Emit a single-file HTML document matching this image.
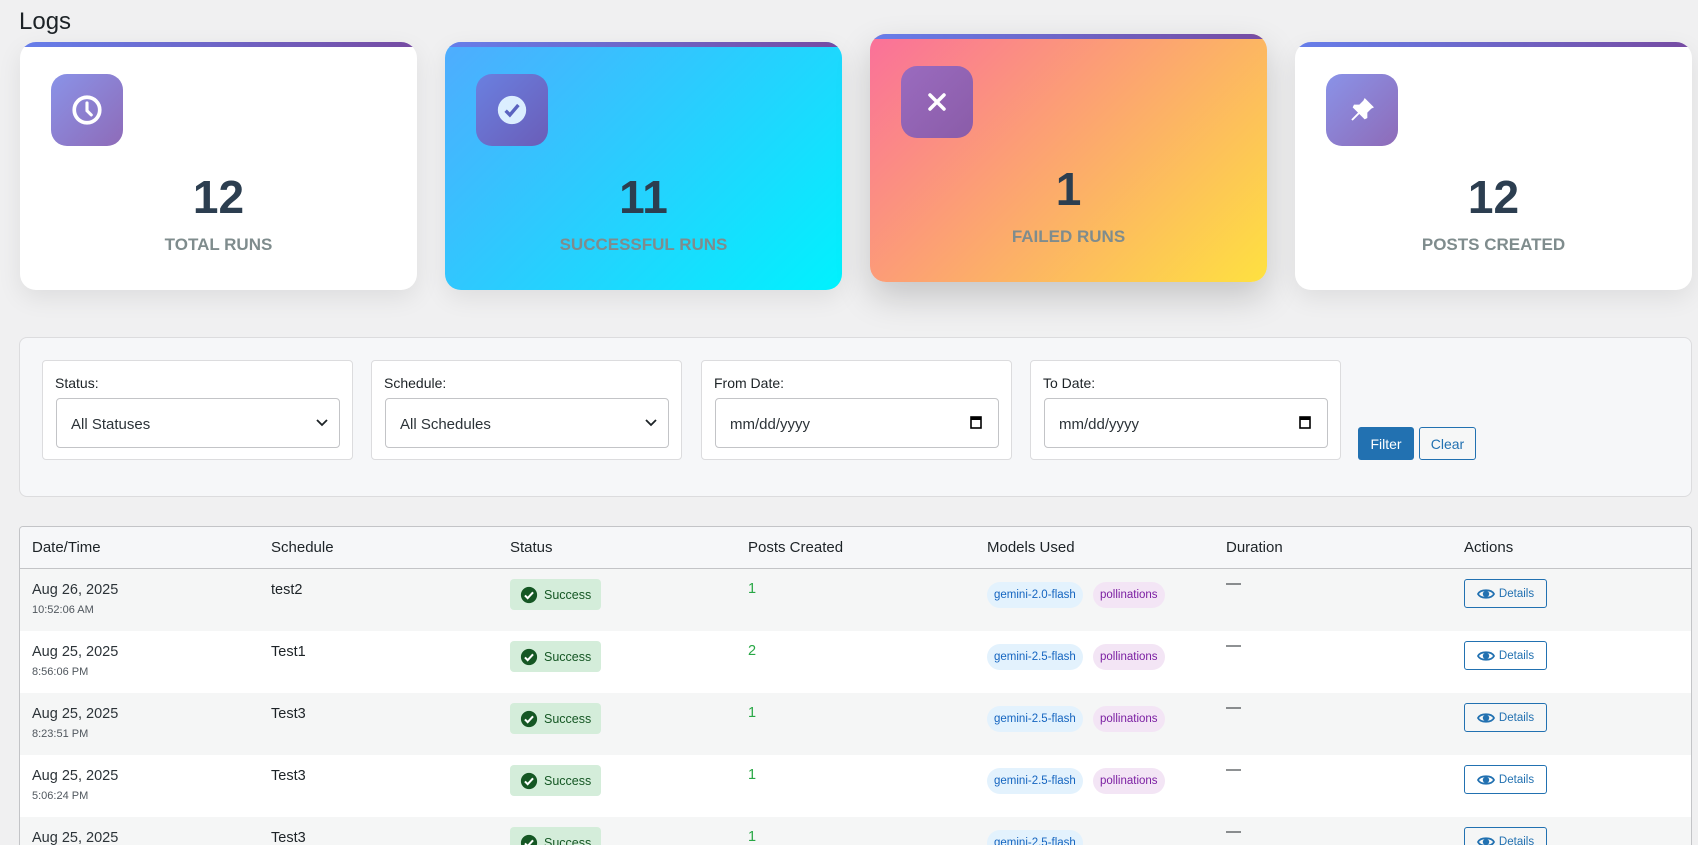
<!DOCTYPE html>
<html style="overflow:hidden;height:845px"><head><style>
*{box-sizing:border-box;margin:0;padding:0}
body{width:1698px;height:845px;overflow:hidden;background:#f0f0f1;font-family:"Liberation Sans",sans-serif;color:#1d2327;position:relative}
.abs{position:absolute}
h1{position:absolute;left:19px;top:8px;font-size:24px;font-weight:400;color:#1d2327}
.card{position:absolute;width:397px;height:248px;border-radius:16px;background:#fff;overflow:hidden;box-shadow:0 8px 25px rgba(0,0,0,.08)}
.card:before{content:"";position:absolute;left:0;top:0;right:0;height:5px;background:linear-gradient(90deg,#667eea,#764ba2)}
.ic{position:absolute;left:31px;top:32px;width:72px;height:72px;border-radius:16px;background:linear-gradient(135deg,#8a93e8,#8e6bb8);display:flex;align-items:center;justify-content:center}
.num{position:absolute;left:0;right:0;top:128px;text-align:center;font-size:46px;font-weight:700;color:#2c3e50}
.lbl{position:absolute;left:0;right:0;top:193px;text-align:center;font-size:17px;font-weight:600;color:#7f8c8d}
.panel{position:absolute;left:19px;top:337px;width:1673px;height:160px;background:#f6f7f9;border:1px solid #dcdcde;border-radius:8px}
.fg{position:absolute;top:22px;width:311px;height:100px;background:#fff;border:1px solid #dcdcde;border-radius:4px}
.fg label{position:absolute;left:12px;top:14px;font-size:14px;color:#1d2327}
.inp{position:absolute;left:13px;top:37px;width:284px;height:50px;border:1px solid #c3c4c7;border-radius:4px;font-size:15px;padding:17px 0 0 14px;color:#2c3338}
.btn{position:absolute;top:89px;height:33px;border-radius:3px;font-size:14px;display:flex;align-items:center;justify-content:center}
.tbl{position:absolute;left:19px;top:526px;width:1673px;height:319px;background:#fff;border:1px solid #c3c4c7;border-bottom:none;border-radius:4px 4px 0 0;overflow:hidden}
.hd{position:absolute;left:0;top:0;right:0;height:42px;background:#f6f7f9;border-bottom:1px solid #c3c4c7}
.th{position:absolute;top:12px;font-size:15px;color:#1d2327}
.row{position:absolute;left:0;right:0;height:62px}
.c{position:absolute}
.badge{position:absolute;left:490px;top:10px;width:91px;height:31px;background:#d4edda;border-radius:4px;font-size:12.5px;color:#155724;display:flex;align-items:center;padding-left:10px;gap:6px}
.m{position:absolute;top:13px;height:26px;border-radius:13px;font-size:11.5px;display:flex;align-items:center;padding:0 7px}
.det{position:absolute;left:1444px;top:10px;width:83px;height:29px;border:1px solid #2271b1;border-radius:3px;color:#2271b1;font-size:11.5px;display:flex;align-items:center;justify-content:center;gap:4px}
</style></head><body>
<h1>Logs</h1>

<div class="card" style="left:20px;top:42px">
<div class="ic"><svg width="34" height="34" viewBox="0 0 24 24"><circle cx="12" cy="12" r="9" fill="none" stroke="#fff" stroke-width="2.6"/><path d="M12 7v5.5l3 3" fill="none" stroke="#fff" stroke-width="2.2" stroke-linecap="round"/></svg></div>
<div class="num">12</div><div class="lbl">TOTAL RUNS</div></div>

<div class="card" style="left:445px;top:42px;background:linear-gradient(135deg,#4facfe,#00f2fe)">
<div class="ic" style="background:linear-gradient(135deg,#6a80e0,#6a5db8)"><svg width="34" height="34" viewBox="0 0 24 24"><circle cx="12" cy="12" r="10" fill="#dbeeff"/><path d="M7.5 12.5l3 3 6-7" fill="none" stroke="#5a63c0" stroke-width="2.4"/></svg></div>
<div class="num">11</div><div class="lbl">SUCCESSFUL RUNS</div></div>

<div class="card" style="left:870px;top:34px;background:linear-gradient(135deg,#fa709a,#fee140);box-shadow:0 15px 35px rgba(0,0,0,.18)">
<div class="ic" style="background:linear-gradient(135deg,#9a6bbf,#8a5ca8)"><svg width="24" height="24" viewBox="0 0 24 24"><path d="M5 5l14 14M19 5L5 19" stroke="#fff" stroke-width="3.5" stroke-linecap="round"/></svg></div>
<div class="num">1</div><div class="lbl">FAILED RUNS</div></div>

<div class="card" style="left:1295px;top:42px">
<div class="ic"><svg width="32" height="32" viewBox="0 0 24 24"><path d="M14 3l7 7-2 1-3 3 0 4-2 1-4-4-5 5-1-1 5-5-4-4 1-2 4 0 3-3z" fill="#fff"/></svg></div>
<div class="num">12</div><div class="lbl">POSTS CREATED</div></div>

<div class="panel">
<div class="fg" style="left:22px"><label>Status:</label><div class="inp">All Statuses<svg class="abs" style="right:10px;top:19px" width="14" height="10" viewBox="0 0 14 10"><path d="M2 2l5 5 5-5" fill="none" stroke="#1d2327" stroke-width="1.8"/></svg></div></div>
<div class="fg" style="left:351px"><label>Schedule:</label><div class="inp">All Schedules<svg class="abs" style="right:10px;top:19px" width="14" height="10" viewBox="0 0 14 10"><path d="M2 2l5 5 5-5" fill="none" stroke="#1d2327" stroke-width="1.8"/></svg></div></div>
<div class="fg" style="left:681px"><label>From Date:</label><div class="inp">mm/dd/yyyy<svg class="abs" style="right:16px;top:16px" width="12" height="14" viewBox="0 0 12 14"><rect x="1" y="2" width="10" height="11" fill="none" stroke="#000" stroke-width="1.6"/><rect x="1" y="2" width="10" height="3" fill="#000"/></svg></div></div>
<div class="fg" style="left:1010px"><label>To Date:</label><div class="inp">mm/dd/yyyy<svg class="abs" style="right:16px;top:16px" width="12" height="14" viewBox="0 0 12 14"><rect x="1" y="2" width="10" height="11" fill="none" stroke="#000" stroke-width="1.6"/><rect x="1" y="2" width="10" height="3" fill="#000"/></svg></div></div>
<div class="btn" style="left:1338px;width:56px;background:#2271b1;color:#fff">Filter</div>
<div class="btn" style="left:1399px;width:57px;border:1px solid #2271b1;color:#2271b1;background:#f6f7f7">Clear</div>
</div>

<div class="tbl">
<div class="hd">
<div class="th" style="left:12px">Date/Time</div><div class="th" style="left:251px">Schedule</div><div class="th" style="left:490px">Status</div><div class="th" style="left:728px">Posts Created</div><div class="th" style="left:967px">Models Used</div><div class="th" style="left:1206px">Duration</div><div class="th" style="left:1444px">Actions</div>
</div>
<div class="row" style="top:42px;background:#f5f6f6">
<div class="c" style="left:12px;top:13px;font-size:14.5px;color:#2c3338">Aug 26, 2025</div><div class="c" style="left:12px;top:35px;font-size:11px;color:#50575e">10:52:06 AM</div>
<div class="c" style="left:251px;top:13px;font-size:14.5px">test2</div>
<div class="badge"><svg width="18" height="18" viewBox="0 0 20 20"><circle cx="10" cy="10" r="9" fill="#155724"/><path d="M5.5 10.5l3 3 6-6.5" fill="none" stroke="#fff" stroke-width="2.3"/></svg>Success</div>
<div class="c" style="left:728px;top:12px;font-size:14.5px;color:#28a745">1</div>
<div class="m" style="left:967px;background:#e3f2fd;color:#1565c0">gemini-2.0-flash</div><div class="m" style="left:1073px;background:#f3e5f5;color:#7b1fa2">pollinations</div>
<div class="c" style="left:1206px;top:6px;font-size:15px">—</div>
<div class="det"><svg width="18" height="16" viewBox="0 0 18 16"><path d="M1 8c2.5-5 13.5-5 16 0-2.5 5-13.5 5-16 0z" fill="none" stroke="#2271b1" stroke-width="1.8"/><circle cx="9" cy="8" r="3.2" fill="#2271b1"/></svg>Details</div>
</div>
<div class="row" style="top:104px;background:#fff">
<div class="c" style="left:12px;top:13px;font-size:14.5px;color:#2c3338">Aug 25, 2025</div><div class="c" style="left:12px;top:35px;font-size:11px;color:#50575e">8:56:06 PM</div>
<div class="c" style="left:251px;top:13px;font-size:14.5px">Test1</div>
<div class="badge"><svg width="18" height="18" viewBox="0 0 20 20"><circle cx="10" cy="10" r="9" fill="#155724"/><path d="M5.5 10.5l3 3 6-6.5" fill="none" stroke="#fff" stroke-width="2.3"/></svg>Success</div>
<div class="c" style="left:728px;top:12px;font-size:14.5px;color:#28a745">2</div>
<div class="m" style="left:967px;background:#e3f2fd;color:#1565c0">gemini-2.5-flash</div><div class="m" style="left:1073px;background:#f3e5f5;color:#7b1fa2">pollinations</div>
<div class="c" style="left:1206px;top:6px;font-size:15px">—</div>
<div class="det"><svg width="18" height="16" viewBox="0 0 18 16"><path d="M1 8c2.5-5 13.5-5 16 0-2.5 5-13.5 5-16 0z" fill="none" stroke="#2271b1" stroke-width="1.8"/><circle cx="9" cy="8" r="3.2" fill="#2271b1"/></svg>Details</div>
</div>
<div class="row" style="top:166px;background:#f5f6f6">
<div class="c" style="left:12px;top:13px;font-size:14.5px;color:#2c3338">Aug 25, 2025</div><div class="c" style="left:12px;top:35px;font-size:11px;color:#50575e">8:23:51 PM</div>
<div class="c" style="left:251px;top:13px;font-size:14.5px">Test3</div>
<div class="badge"><svg width="18" height="18" viewBox="0 0 20 20"><circle cx="10" cy="10" r="9" fill="#155724"/><path d="M5.5 10.5l3 3 6-6.5" fill="none" stroke="#fff" stroke-width="2.3"/></svg>Success</div>
<div class="c" style="left:728px;top:12px;font-size:14.5px;color:#28a745">1</div>
<div class="m" style="left:967px;background:#e3f2fd;color:#1565c0">gemini-2.5-flash</div><div class="m" style="left:1073px;background:#f3e5f5;color:#7b1fa2">pollinations</div>
<div class="c" style="left:1206px;top:6px;font-size:15px">—</div>
<div class="det"><svg width="18" height="16" viewBox="0 0 18 16"><path d="M1 8c2.5-5 13.5-5 16 0-2.5 5-13.5 5-16 0z" fill="none" stroke="#2271b1" stroke-width="1.8"/><circle cx="9" cy="8" r="3.2" fill="#2271b1"/></svg>Details</div>
</div>
<div class="row" style="top:228px;background:#fff">
<div class="c" style="left:12px;top:13px;font-size:14.5px;color:#2c3338">Aug 25, 2025</div><div class="c" style="left:12px;top:35px;font-size:11px;color:#50575e">5:06:24 PM</div>
<div class="c" style="left:251px;top:13px;font-size:14.5px">Test3</div>
<div class="badge"><svg width="18" height="18" viewBox="0 0 20 20"><circle cx="10" cy="10" r="9" fill="#155724"/><path d="M5.5 10.5l3 3 6-6.5" fill="none" stroke="#fff" stroke-width="2.3"/></svg>Success</div>
<div class="c" style="left:728px;top:12px;font-size:14.5px;color:#28a745">1</div>
<div class="m" style="left:967px;background:#e3f2fd;color:#1565c0">gemini-2.5-flash</div><div class="m" style="left:1073px;background:#f3e5f5;color:#7b1fa2">pollinations</div>
<div class="c" style="left:1206px;top:6px;font-size:15px">—</div>
<div class="det"><svg width="18" height="16" viewBox="0 0 18 16"><path d="M1 8c2.5-5 13.5-5 16 0-2.5 5-13.5 5-16 0z" fill="none" stroke="#2271b1" stroke-width="1.8"/><circle cx="9" cy="8" r="3.2" fill="#2271b1"/></svg>Details</div>
</div>
<div class="row" style="top:290px;background:#f5f6f6">
<div class="c" style="left:12px;top:13px;font-size:14.5px;color:#2c3338">Aug 25, 2025</div>
<div class="c" style="left:251px;top:13px;font-size:14.5px">Test3</div>
<div class="badge"><svg width="18" height="18" viewBox="0 0 20 20"><circle cx="10" cy="10" r="9" fill="#155724"/><path d="M5.5 10.5l3 3 6-6.5" fill="none" stroke="#fff" stroke-width="2.3"/></svg>Success</div>
<div class="c" style="left:728px;top:12px;font-size:14.5px;color:#28a745">1</div>
<div class="m" style="left:967px;background:#e3f2fd;color:#1565c0">gemini-2.5-flash</div>
<div class="c" style="left:1206px;top:6px;font-size:15px">—</div>
<div class="det"><svg width="18" height="16" viewBox="0 0 18 16"><path d="M1 8c2.5-5 13.5-5 16 0-2.5 5-13.5 5-16 0z" fill="none" stroke="#2271b1" stroke-width="1.8"/><circle cx="9" cy="8" r="3.2" fill="#2271b1"/></svg>Details</div>
</div>
</div>
</body></html>
